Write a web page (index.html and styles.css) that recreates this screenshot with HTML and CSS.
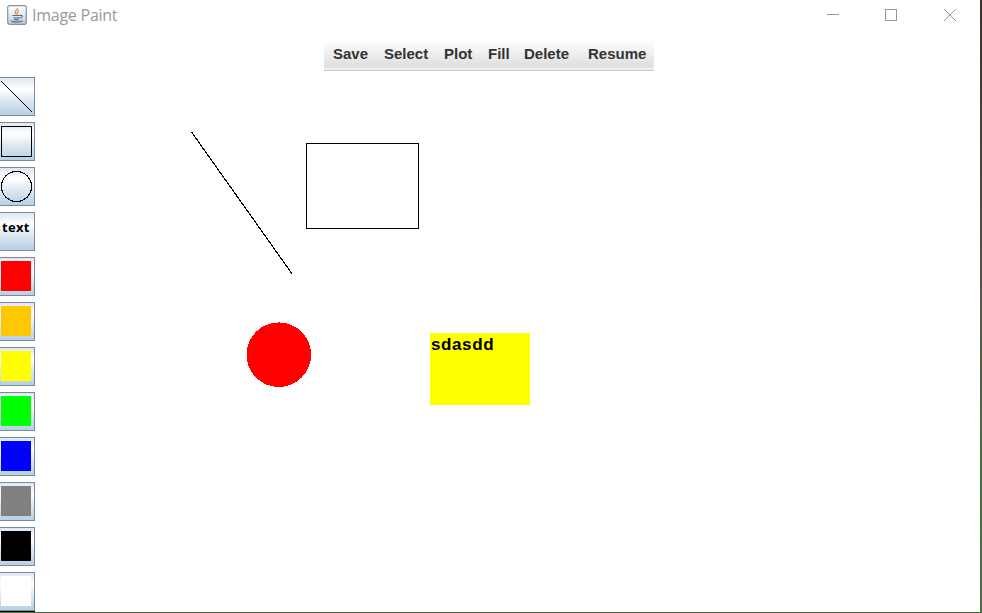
FILE: index.html
```html
<!DOCTYPE html>
<html lang="en">
<head>
<meta charset="utf-8">
<title>Image Paint</title>
<link rel="stylesheet" href="styles.css">
</head>
<body>
<div class="window">
  <header class="titlebar">
    <svg class="app-icon" width="20" height="20" viewBox="0 0 20 20">
      <defs><linearGradient id="tile" x2="0" y2="1"><stop offset="0" stop-color="#fff"/><stop offset=".5" stop-color="#e4e9ee"/><stop offset="1" stop-color="#b9c6d1"/></linearGradient></defs>
      <rect x=".7" y=".7" width="18.6" height="18.6" rx="2" fill="url(#tile)" stroke="#8393a0" stroke-width="1.2"/>
      <path d="M10.5 3C11 5 7.500 5.500 8 7.300C8.200 8.300 9.300 8.700 9.400 9.800M12 5.500C9.600 6.500 10.800 7.800 10.500 9" fill="none" stroke="#ef8a35" stroke-width="1.3"/>
      <path d="M5.500 10.500H13M6.500 12.700Q9.500 13.500 12.500 12.500M7 14.500Q9.500 15.200 12 14.400M13 10.500Q16 10 15 12Q14.300 13 13 13.200M4.500 15.500Q4 17 10 16.900T15.500 15.600" fill="none" stroke="#4b7089" stroke-width="1.1"/>
    </svg>
    <span class="title">Image Paint</span>
    <svg class="controls" width="131" height="13" viewBox="0 0 131 13" fill="none" stroke="#999">
      <path d="M0 5.500h12M58.500.5h11v11h-11z" shape-rendering="crispEdges"/>
      <path d="M117.200.2l11.600 11.600M128.800.2l-11.600 11.600"/>
    </svg>
  </header>
  <nav class="menu">
    <span>Save</span><span>Select</span><span>Plot</span><span>Fill</span><span>Delete</span><span>Resume</span>
  </nav>
  <main class="workspace">
    <aside class="tools">
      <button class="tool"><svg width="34" height="37" shape-rendering="crispEdges"><path d="M1 3l31 31" stroke="#000"/></svg></button>
      <button class="tool"><svg width="34" height="37" shape-rendering="crispEdges"><rect x="1.500" y="3.500" width="30" height="30" fill="none" stroke="#000"/></svg></button>
      <button class="tool"><svg width="34" height="37" shape-rendering="crispEdges"><circle cx="16.500" cy="18.500" r="15" fill="none" stroke="#000" stroke-width="1.2"/></svg></button>
      <button class="tool label">text</button>
      <button class="tool"><i class="swatch red"></i></button>
      <button class="tool"><i class="swatch orange"></i></button>
      <button class="tool"><i class="swatch yellow"></i></button>
      <button class="tool"><i class="swatch green"></i></button>
      <button class="tool"><i class="swatch blue"></i></button>
      <button class="tool"><i class="swatch gray"></i></button>
      <button class="tool"><i class="swatch black"></i></button>
      <button class="tool last"><i class="swatch white"></i></button>
    </aside>
    <section class="canvas">
      <svg class="drawing" width="945" height="541" shape-rendering="crispEdges">
        <path d="M156.500 61L257 202.800" stroke="#000" stroke-width="1.15"/>
        <rect x="271.500" y="72.500" width="112" height="85" fill="none" stroke="#000"/>
        <circle cx="243.800" cy="283.700" r="32.300" fill="red"/>
      </svg>
      <div class="note">sdasdd</div>
    </section>
  </main>
</div>
</body>
</html>
```
FILE: styles.css
```css
* { box-sizing: border-box; }
body { margin: 0; background: #fff; overflow: hidden; }
.window {
  width: 982px;
  height: 613px;
  display: flex;
  flex-direction: column;
  border-right: 2px solid;
  border-bottom: 1px solid;
  border-image: linear-gradient(#3c3029, #5b5149 45%, #40703a 80%, #4c6b45) 1;
  border-image-width: 0 2px 1px 0;
}
.titlebar {
  flex: none;
  height: 40px;
  display: flex;
  align-items: flex-start;
  padding: 5px 22px 0 7px;
}
.title {
  margin: -2px auto 0 5px;
  font: 16px/24px "Open Sans", "Noto Sans", sans-serif;
  letter-spacing: -0.25px;
  color: #999;
}
.controls { margin-top: 4px; }
.menu {
  flex: none;
  width: 330px;
  height: 31px;
  margin-left: 324px;
  padding-left: 9px;
  display: grid;
  grid-template-columns: 51px 60px 44px 36px 64px auto;
  font: bold 15px/28px "Liberation Sans", Arial, sans-serif;
  color: #333;
  background: linear-gradient(#fff, #dedede 27px, #eee 28px, #eee 30px, #c8c8c8 30px);
}
.workspace { flex: 1; min-height: 0; display: flex; }
.tools {
  width: 35px;
  flex: none;
  padding-top: 6px;
  display: flex;
  flex-direction: column;
  gap: 6px;
}
.tool {
  display: block;
  flex: none;
  width: 35px;
  height: 39px;
  margin: 0;
  padding: 0;
  border: 1px solid #7a8a99;
  border-left: 0;
  background: linear-gradient(#dde8f3, #fff 30%, #dde8f3 60%, #b8cfe5);
  text-align: left;
}
.tool svg { display: block; }
.label {
  padding: 0 0 10px 2px;
  font: bold 13px/16px "Noto Sans", "DejaVu Sans", sans-serif;
  letter-spacing: 0.4px;
  color: #000;
}
.last { box-shadow: 0 1px #000; }
.swatch { display: block; width: 30px; height: 30px; margin: 0 0 1px 1px; }
.red { background: #f00; }
.orange { background: #ffc800; }
.yellow { background: #ff0; }
.green { background: #0f0; }
.blue { background: #00f; }
.gray { background: #808080; }
.black { background: #000; }
.white { background: #fff; }
.canvas { position: relative; flex: 1; }
.drawing { display: block; }
.note {
  position: absolute;
  left: 395px;
  top: 262px;
  width: 100px;
  height: 72px;
  padding-left: 1px;
  background: #ff0;
  color: #000;
  font: bold 17px/24px "Liberation Sans", Arial, sans-serif;
  letter-spacing: 0.6px;
}
```
